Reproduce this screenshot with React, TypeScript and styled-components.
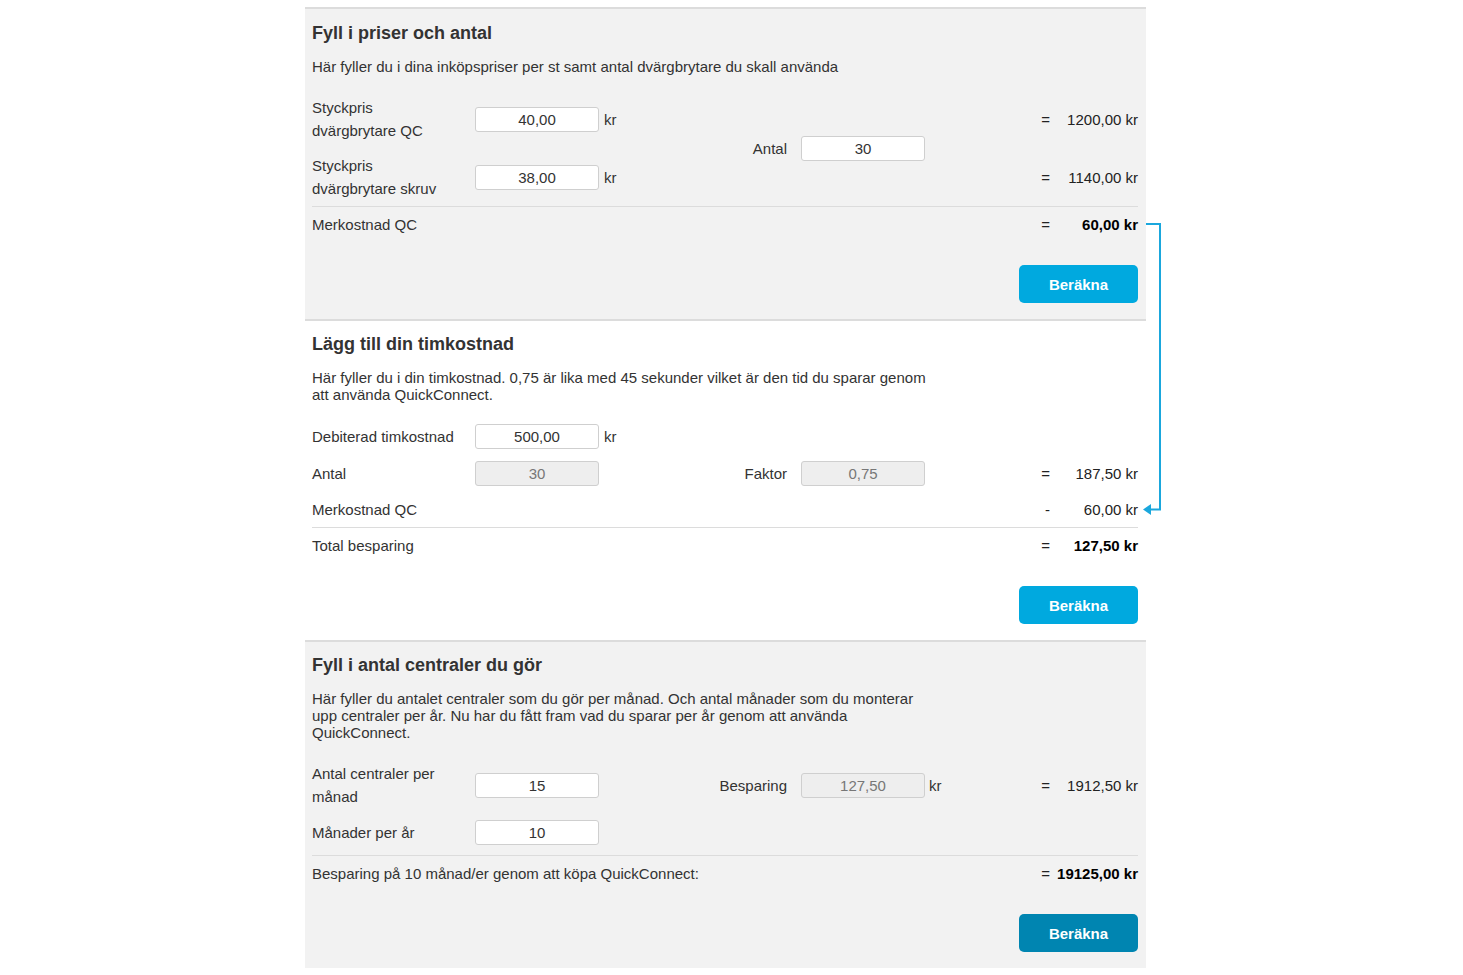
import { FC } from 'react';

import styled, { createGlobalStyle } from 'styled-components';

const GlobalStyle = createGlobalStyle`
  body {
    margin: 0;
    background: #fff;
    font-family: "Liberation Sans", Arial, sans-serif;
    color: #333;
  }
`;

const Panel = styled.div`
  position: relative;
  width: 841px;
  margin: 7px 0 0 305px;
`;

const Section = styled.section<{ $tone: 'gray' | 'white' }>`
  background: ${(p) => (p.$tone === 'gray' ? '#f2f2f2' : '#fff')};
  border-top: 2px solid #dcdcdc;
  padding: 12px 8px 16px 7px;

  &:first-child {
    padding-top: 13px;
  }

  &:last-child {
    border-bottom: 2px solid #dcdcdc;
  }
`;

const Title = styled.h2`
  margin: 0;
  font-size: 18px;
  line-height: 22px;
  font-weight: bold;
  color: #333;
`;

const Intro = styled.p`
  margin: 14px 0 0;
  max-width: 620px;
  font-size: 15px;
  line-height: 17px;
  color: #333;
`;

const Rows = styled.div`
  margin-top: 21px;
  display: grid;
  grid-template-columns: 163px 124px 40px 162px 124px 40px 1fr;
  row-gap: 12px;
  align-items: center;
  font-size: 15px;
  line-height: 23px;
`;

const Total = styled(Rows)<{ $loose?: boolean }>`
  margin-top: ${(p) => (p.$loose ? '10px' : '6px')};
  padding-top: 6px;
  border-top: 1px solid #dcdcdc;
`;

const Label = styled.div<{ $wide?: boolean }>`
  grid-column: ${(p) => (p.$wide ? '1 / 7' : '1')};
  color: #333;
`;

const Input = styled.input<{ $locked?: boolean }>`
  grid-column: 2;
  width: 124px;
  height: 25px;
  box-sizing: border-box;
  padding: 0;
  border: 1px solid #cfcfcf;
  border-radius: 3px;
  background: ${(p) => (p.$locked ? '#eee' : '#fff')};
  color: ${(p) => (p.$locked ? '#777' : '#333')};
  font: 15px "Liberation Sans", Arial, sans-serif;
  text-align: center;
  outline: none;
`;

const MidInput = styled(Input)<{ $span?: number }>`
  grid-column: 5;
  grid-row: span ${(p) => p.$span || 1};
`;

const Unit = styled.span`
  grid-column: 3;
  padding-left: 5px;
`;

const MidUnit = styled(Unit)`
  grid-column: 6;
  padding-left: 4px;
`;

const MidLabel = styled.div<{ $span?: number }>`
  grid-column: 4;
  grid-row: span ${(p) => p.$span || 1};
  padding-right: 14px;
  text-align: right;
`;

const Result = styled.div<{ $strong?: boolean }>`
  grid-column: 7;
  display: grid;
  grid-template-columns: 1fr 86px;
  text-align: right;
  font-weight: ${(p) => (p.$strong ? 'bold' : 'normal')};
  color: ${(p) => (p.$strong ? '#000' : '#222')};
`;

const Sign = styled.span`
  font-weight: normal;
  color: #222;
  padding-right: 2px;
`;

const Actions = styled.div`
  display: flex;
  justify-content: flex-end;
  margin-top: 29px;
`;

const Button = styled.button<{ $pressed?: boolean }>`
  width: 119px;
  height: 38px;
  border: 0;
  border-radius: 5px;
  background: ${(p) => (p.$pressed ? '#0085b1' : '#00a9df')};
  color: #fff;
  font: bold 15px "Liberation Sans", Arial, sans-serif;
  cursor: pointer;
`;

const Connector = styled.svg`
  position: absolute;
  left: 833px;
  top: 213px;
  overflow: visible;
`;

type ResultProps = { sign?: string; value: string; strong?: boolean };

const Sum: FC<ResultProps> = ({ sign = '=', value, strong }) => (
  <Result $strong={strong}>
    <Sign>{sign}</Sign>
    <span>{value}</span>
  </Result>
);

const App: FC = () => {
  return (
    <>
      <GlobalStyle />
      <Panel>
        <Section $tone="gray">
          <Title>Fyll i priser och antal</Title>
          <Intro>Här fyller du i dina inköpspriser per st samt antal dvärgbrytare du skall använda</Intro>
          <Rows>
            <Label>
              Styckpris
              <br />
              dvärgbrytare QC
            </Label>
            <Input defaultValue="40,00" />
            <Unit>kr</Unit>
            <MidLabel $span={2}>Antal</MidLabel>
            <MidInput $span={2} defaultValue="30" />
            <Sum value="1200,00 kr" />
            <Label>
              Styckpris
              <br />
              dvärgbrytare skruv
            </Label>
            <Input defaultValue="38,00" />
            <Unit>kr</Unit>
            <Sum value="1140,00 kr" />
          </Rows>
          <Total>
            <Label>Merkostnad QC</Label>
            <Sum value="60,00 kr" strong />
          </Total>
          <Actions>
            <Button>Beräkna</Button>
          </Actions>
        </Section>

        <Section $tone="white">
          <Title>Lägg till din timkostnad</Title>
          <Intro>
            Här fyller du i din timkostnad. 0,75 är lika med 45 sekunder vilket är den tid du sparar genom att använda
            QuickConnect.
          </Intro>
          <Rows>
            <Label>Debiterad timkostnad</Label>
            <Input defaultValue="500,00" />
            <Unit>kr</Unit>
            <Label>Antal</Label>
            <Input $locked readOnly value="30" />
            <MidLabel>Faktor</MidLabel>
            <MidInput $locked readOnly value="0,75" />
            <Sum value="187,50 kr" />
            <Label>Merkostnad QC</Label>
            <Sum sign="-" value="60,00 kr" />
          </Rows>
          <Total>
            <Label>Total besparing</Label>
            <Sum value="127,50 kr" strong />
          </Total>
          <Actions>
            <Button>Beräkna</Button>
          </Actions>
        </Section>

        <Section $tone="gray">
          <Title>Fyll i antal centraler du gör</Title>
          <Intro>
            Här fyller du antalet centraler som du gör per månad. Och antal månader som du monterar upp centraler per år.
            Nu har du fått fram vad du sparar per år genom att använda QuickConnect.
          </Intro>
          <Rows>
            <Label>
              Antal centraler per
              <br />
              månad
            </Label>
            <Input defaultValue="15" />
            <MidLabel>Besparing</MidLabel>
            <MidInput $locked readOnly value="127,50" />
            <MidUnit>kr</MidUnit>
            <Sum value="1912,50 kr" />
            <Label>Månader per år</Label>
            <Input defaultValue="10" />
          </Rows>
          <Total $loose>
            <Label $wide>Besparing på 10 månad/er genom att köpa QuickConnect:</Label>
            <Sum value="19125,00 kr" strong />
          </Total>
          <Actions>
            <Button $pressed>Beräkna</Button>
          </Actions>
        </Section>

        <Connector width="24" height="300" viewBox="0 0 24 300">
          <path d="M8 4 H22 V289.5 H12" fill="none" stroke="#1aa7dd" strokeWidth="2" />
          <polygon points="5,289.5 13,284 13,295" fill="#1aa7dd" />
        </Connector>
      </Panel>
    </>
  );
};

export default App;
